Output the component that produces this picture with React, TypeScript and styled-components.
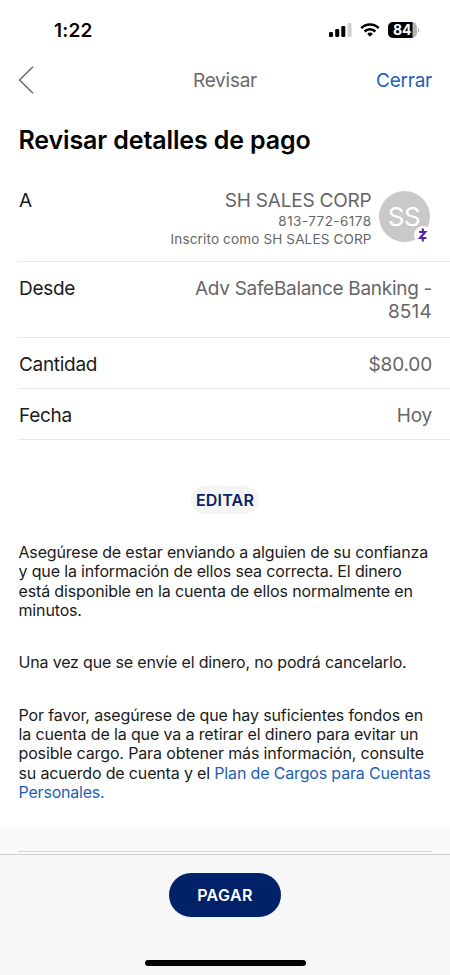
import styled, { createGlobalStyle } from 'styled-components';

type TextProps = {
  $spacing?: number;
};

const GlobalStyle = createGlobalStyle`
  * {
    box-sizing: border-box;
  }

  body {
    margin: 0;
    background: #fff;
    font-family: Inter, 'Liberation Sans', sans-serif;
    color: #1b1b1b;
  }

  p, h1 {
    margin: 0;
  }
`;

const Screen = styled.div`
  width: 450px;
  height: 975px;
  display: flex;
  flex-direction: column;
  overflow: hidden;
`;

const StatusBar = styled.div`
  height: 60px;
  padding: 0 31px 0 54px;
  display: flex;
  align-items: center;
  justify-content: space-between;
`;

const Time = styled.span`
  padding-top: 2px;
  font-size: 19px;
  font-weight: 600;
  line-height: 24px;
  letter-spacing: 0.2px;
  color: #000;
`;

const NavBar = styled.div`
  height: 40px;
  padding: 0 18px;
  display: grid;
  grid-template-columns: 1fr auto 1fr;
  align-items: center;
  font-size: 19px;
  line-height: 24px;

  svg {
    display: block;
  }
`;

const NavTitle = styled.span`
  padding-top: 2px;
  letter-spacing: -0.25px;
  color: #6b6b6b;
`;

const CloseLink = styled.span`
  justify-self: end;
  padding-top: 2px;
  letter-spacing: -0.25px;
  color: #1d5fb4;
`;

const Title = styled.h1`
  height: 84px;
  padding: 24px 0 0 18.5px;
  font-size: 25px;
  font-weight: 600;
  line-height: 32px;
  letter-spacing: -0.13px;
  white-space: nowrap;
  color: #000;
`;

const Row = styled.div<{ $height: number }>`
  height: ${(props) => props.$height}px;
  margin-left: 18px;
  padding: 15px 18px 0 1px;
  display: flex;
  justify-content: space-between;
  border-bottom: 1px solid #e8e8e8;
  font-size: 19px;
  line-height: 23px;
  white-space: nowrap;
`;

const Label = styled.span`
  letter-spacing: -0.3px;
`;

const Value = styled.span<TextProps>`
  text-align: right;
  letter-spacing: ${(props) => props.$spacing ?? 0}px;
  color: #666;
`;

const Account = styled.div`
  display: flex;
  flex-direction: column;
`;

const PayeeRow = styled(Row)`
  padding: 5px 20px 0 1px;
`;

const Payee = styled.div`
  display: flex;
  column-gap: 7.5px;
`;

const PayeeInfo = styled.div`
  display: flex;
  flex-direction: column;
  row-gap: 0.5px;
  text-align: right;
  color: #666;
`;

const PayeeDetail = styled.span<TextProps>`
  font-size: 13.5px;
  line-height: 17.5px;
  letter-spacing: ${(props) => props.$spacing ?? 0}px;
`;

const Avatar = styled.div`
  position: relative;
  width: 51px;
  height: 51px;
  margin-top: 2px;
  padding-right: 1px;
  border-radius: 50%;
  background: #c9c9c9;
  color: #fff;
  font-size: 26px;
  line-height: 52px;
  letter-spacing: -0.5px;
  text-align: center;
`;

const ZelleBadge = styled.div`
  position: absolute;
  right: -2px;
  bottom: -2px;
  width: 18px;
  height: 18px;
  border-radius: 50%;
  background: #fff;

  svg {
    display: block;
  }
`;

const EditButton = styled.button`
  align-self: center;
  width: 68px;
  height: 28px;
  margin-top: 46px;
  padding: 0;
  border: 0;
  border-radius: 14px;
  background: #f5f5f5;
  font: 600 16px/28px Inter, 'Liberation Sans', sans-serif;
  letter-spacing: 0.2px;
  color: #0b2265;
`;

const Notes = styled.div`
  margin-top: 29px;
  padding-left: 18.5px;
  display: flex;
  flex-direction: column;
  row-gap: 33.2px;
  font-size: 16px;
  line-height: 19.3px;
  white-space: nowrap;
`;

const Line = styled.span<TextProps>`
  display: block;
  letter-spacing: ${(props) => props.$spacing ?? -0.15}px;
`;

const PlanLink = styled.span`
  color: #1d5fb4;
`;

const ScrollEdge = styled.div`
  height: 26px;
  margin-top: auto;
  padding: 23px 18px 0;
  background: #fafafa;

  &::after {
    content: '';
    display: block;
    height: 1px;
    background: #d6d6d6;
  }
`;

const Footer = styled.div`
  height: 121px;
  border-top: 1px solid #cfcfcf;
  background: #f7f7f7;
  display: flex;
  flex-direction: column;
  align-items: center;
`;

const PayButton = styled.button`
  width: 112px;
  height: 44px;
  margin-top: 18px;
  padding: 0;
  border: 0;
  border-radius: 22px;
  background: #012169;
  font: 600 16px/44px Inter, 'Liberation Sans', sans-serif;
  letter-spacing: 0.4px;
  color: #fff;
`;

const HomeIndicator = styled.div`
  width: 161px;
  height: 6px;
  margin-top: 42.5px;
  border-radius: 3px;
  background: #000;
`;

const StatusIcons = () => (
  <svg width="90" height="20" viewBox="0 0 90 20">
    <rect x="0" y="12" width="4" height="5" rx="1.2" />
    <rect x="6.2" y="9" width="4" height="8" rx="1.2" />
    <rect x="12.3" y="6" width="4" height="11" rx="1.2" />
    <rect x="18.6" y="3" width="4" height="14" rx="1.2" fill="#d0d0d0" />
    <g fill="none" stroke="#000" strokeWidth="2.5">
      <path d="M32.3 8.1a12.2 12.2 0 0 1 17.4 0" />
      <path d="M35.6 11.5a7.6 7.6 0 0 1 10.8 0" />
    </g>
    <path d="M38.2 13.9a4 4 0 0 1 5.6 0L41 16.7z" />
    <clipPath id="battery">
      <rect x="59" y="2" width="29" height="16" rx="5" />
    </clipPath>
    <g clipPath="url(#battery)">
      <rect x="59" y="2" width="29" height="16" fill="#b5b5b5" />
      <rect x="59" y="2" width="24.5" height="16" />
    </g>
    <path d="M88.8 7.5c2 .8 2 4.2 0 5z" fill="#b5b5b5" />
    <text
      x="73.3"
      y="15.1"
      fill="#fff"
      fontFamily="Inter, sans-serif"
      fontSize="14"
      fontWeight="700"
      textAnchor="middle"
    >
      84
    </text>
  </svg>
);

const BackIcon = () => (
  <svg width="16" height="28" viewBox="0 0 16 28">
    <path d="M15 .8 1.5 14 15 27.2" fill="none" stroke="#666" strokeWidth="1.4" />
  </svg>
);

const ZelleIcon = () => (
  <svg width="18" height="18" viewBox="0 0 18 18">
    <path
      d="M5.2 6h6L6 12h6.4M8.8 2.6V6M8.8 12v3.4"
      fill="none"
      stroke="#5b1fa8"
      strokeWidth="2.1"
    />
  </svg>
);

const App = () => {
  return (
    <>
      <GlobalStyle />
      <Screen>
        <StatusBar>
          <Time>1:22</Time>
          <StatusIcons />
        </StatusBar>
        <NavBar>
          <BackIcon />
          <NavTitle>Revisar</NavTitle>
          <CloseLink>Cerrar</CloseLink>
        </NavBar>
        <Title>Revisar detalles de pago</Title>
        <PayeeRow $height={78}>
          <Label>A</Label>
          <Payee>
            <PayeeInfo>
              <Value $spacing={-0.2}>SH SALES CORP</Value>
              <PayeeDetail $spacing={0.45}>813-772-6178</PayeeDetail>
              <PayeeDetail $spacing={0.15}>Inscrito como SH SALES CORP</PayeeDetail>
            </PayeeInfo>
            <Avatar>
              SS
              <ZelleBadge>
                <ZelleIcon />
              </ZelleBadge>
            </Avatar>
          </Payee>
        </PayeeRow>
        <Row $height={76}>
          <Label>Desde</Label>
          <Account>
            <Value $spacing={-0.3}>Adv SafeBalance Banking -</Value>
            <Value $spacing={0.2}>8514</Value>
          </Account>
        </Row>
        <Row $height={51}>
          <Label>Cantidad</Label>
          <Value $spacing={-0.15}>$80.00</Value>
        </Row>
        <Row $height={51}>
          <Label>Fecha</Label>
          <Value $spacing={-0.2}>Hoy</Value>
        </Row>
        <EditButton>EDITAR</EditButton>
        <Notes>
          <p>
            <Line $spacing={-0.17}>Asegúrese de estar enviando a alguien de su confianza</Line>
            <Line>y que la información de ellos sea correcta. El dinero</Line>
            <Line $spacing={-0.14}>está disponible en la cuenta de ellos normalmente en</Line>
            <Line>minutos.</Line>
          </p>
          <p>
            <Line $spacing={-0.17}>Una vez que se envíe el dinero, no podrá cancelarlo.</Line>
          </p>
          <p>
            <Line $spacing={-0.13}>Por favor, asegúrese de que hay suficientes fondos en</Line>
            <Line $spacing={-0.13}>la cuenta de la que va a retirar el dinero para evitar un</Line>
            <Line $spacing={-0.14}>posible cargo. Para obtener más información, consulte</Line>
            <Line $spacing={-0.16}>
              su acuerdo de cuenta y el <PlanLink>Plan de Cargos para Cuentas</PlanLink>
            </Line>
            <Line $spacing={-0.2}>
              <PlanLink>Personales.</PlanLink>
            </Line>
          </p>
        </Notes>
        <ScrollEdge />
        <Footer>
          <PayButton>PAGAR</PayButton>
          <HomeIndicator />
        </Footer>
      </Screen>
    </>
  );
};

export default App;
